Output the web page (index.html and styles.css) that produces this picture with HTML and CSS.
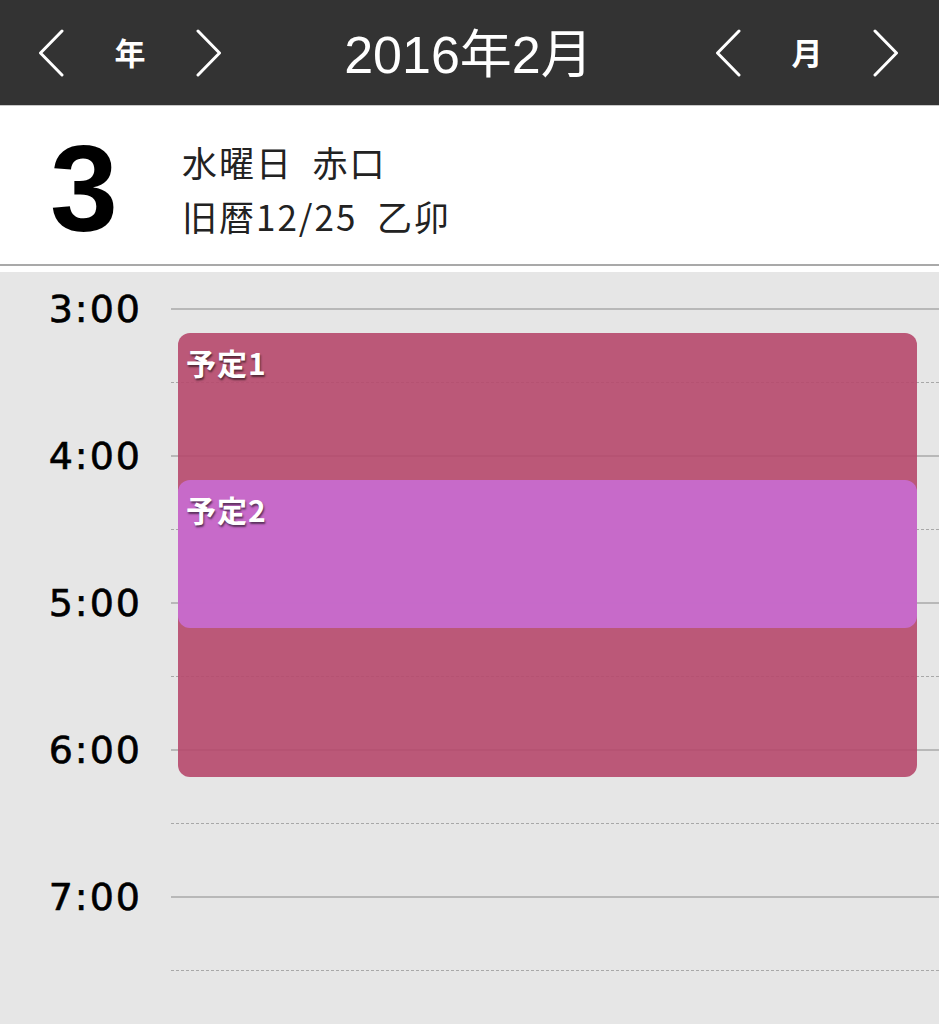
FILE: index.html
```html
<!DOCTYPE html>
<html lang="ja">
<head>
  <meta charset="UTF-8">
  <meta name="viewport" content="width=device-width, initial-scale=1.0">
  <title>2016年2月3日</title>
  <link rel="stylesheet" href="styles.css">
</head>
<body>
  <!-- Top bar: year / month navigation -->
  <header class="topbar">
    <div class="nav">
      <span class="chev">
        <svg width="26" height="48" viewBox="0 0 26 48"><polyline points="24,2 2.5,24 24,46" /></svg>
      </span>
      <span class="nav-label">年</span>
      <span class="chev">
        <svg width="26" height="48" viewBox="0 0 26 48"><polyline points="2,2 23.5,24 2,46" /></svg>
      </span>
    </div>
    <h1 class="title">2016年2月</h1>
    <div class="nav">
      <span class="chev">
        <svg width="26" height="48" viewBox="0 0 26 48"><polyline points="24,2 2.5,24 24,46" /></svg>
      </span>
      <span class="nav-label">月</span>
      <span class="chev">
        <svg width="26" height="48" viewBox="0 0 26 48"><polyline points="2,2 23.5,24 2,46" /></svg>
      </span>
    </div>
  </header>

  <!-- Selected day -->
  <section class="day">
    <div class="day-num">3</div>
    <div class="day-info">
      <p>水曜日&ensp;赤口</p>
      <p>旧暦12/25&ensp;乙卯</p>
    </div>
  </section>

  <!-- Timeline -->
  <main class="timeline">
    <div class="slot"><span class="hour">3:00</span><span class="line"></span></div>
    <div class="slot half"><span class="hour"></span><span class="line"></span></div>
    <div class="slot"><span class="hour">4:00</span><span class="line"></span></div>
    <div class="slot half"><span class="hour"></span><span class="line"></span></div>
    <div class="slot"><span class="hour">5:00</span><span class="line"></span></div>
    <div class="slot half"><span class="hour"></span><span class="line"></span></div>
    <div class="slot"><span class="hour">6:00</span><span class="line"></span></div>
    <div class="slot half"><span class="hour"></span><span class="line"></span></div>
    <div class="slot"><span class="hour">7:00</span><span class="line"></span></div>
    <div class="slot half"><span class="hour"></span><span class="line"></span></div>

    <div class="event event-1">予定1</div>
    <div class="event event-2">予定2</div>
  </main>
</body>
</html>
```

FILE: styles.css
```css
/* General */
body {
  margin: 0;
  width: 939px;
  height: 1024px;
  overflow: hidden;
  background: #e6e6e6;
  font-family: "Liberation Sans", "Noto Sans CJK JP", sans-serif;
  color: #1a1a1a;
}

/* Top bar */
.topbar {
  height: 106px;
  box-sizing: border-box;
  padding: 0 40px 0 38px;
  background-color: #333333;
  border-bottom: 1px solid #c9c9c9;
  display: flex;
  align-items: center;
  justify-content: space-between;
  color: #ffffff;
}

.nav {
  width: 184px;
  display: flex;
  align-items: center;
  justify-content: space-between;
}

.chev {
  display: flex;
  height: 48px;
}

.chev polyline {
  fill: none;
  stroke: #ffffff;
  stroke-width: 3;
  stroke-linecap: round;
  stroke-linejoin: round;
}

.nav-label {
  font-family: "Noto Sans CJK JP", sans-serif;
  font-size: 31px;
  font-weight: 700;
  line-height: 1;
  margin-bottom: 3px;
}

.title {
  margin: 0;
  font-size: 52px;
  font-weight: 400;
  line-height: 1;
  margin-top: 5px;
}

/* Day header */
.day {
  height: 158px;
  background: #ffffff;
  border-bottom: 2px solid #a9a9a9;
  display: flex;
  align-items: center;
}

.day-num {
  width: 130px;
  padding-left: 50px;
  box-sizing: border-box;
  font-family: "Liberation Sans", sans-serif;
  font-weight: 700;
  font-size: 122px;
  line-height: 1;
  color: #000000;
  margin-top: 8px;
}

.day-info {
  padding-left: 52px;
  margin-top: 8px;
}

.day-info p {
  margin: 0;
  font-family: "Noto Sans CJK JP", sans-serif;
  font-size: 35px;
  letter-spacing: 2px;
  line-height: 54px;
  color: #222222;
}

/* Timeline */
.timeline {
  position: relative;
  border-top: 6px solid #ffffff;
}

.slot {
  height: 73.5px;
  display: flex;
  align-items: center;
}

.hour {
  width: 171px;
  box-sizing: border-box;
  padding-right: 29px;
  text-align: right;
  font-family: "DejaVu Sans", sans-serif;
  font-size: 38px;
  letter-spacing: 2px;
  -webkit-text-stroke: 0.6px #000;
  color: #000000;
}

.line {
  flex: 1;
  border-top: 2px solid #b8b8b8;
}

.half .line {
  border-top: 1px dashed #a8a8a8;
}

/* Events */
.event {
  position: absolute;
  left: 178px;
  width: 739px;
  box-sizing: border-box;
  padding: 11px 8px;
  border-radius: 12px;
  font-family: "Noto Sans CJK JP", sans-serif;
  font-size: 30px;
  font-weight: 700;
  letter-spacing: 1px;
  line-height: 36px;
  color: #ffffff;
  text-shadow: 1px 2px 2px rgba(0, 0, 0, 0.55);
}

.event-1 {
  top: 61px;
  height: 444px;
  background-color: rgba(182, 72, 108, 0.9);
}

.event-2 {
  top: 208px;
  height: 148px;
  background-color: rgba(199, 108, 206, 0.95);
}
```
